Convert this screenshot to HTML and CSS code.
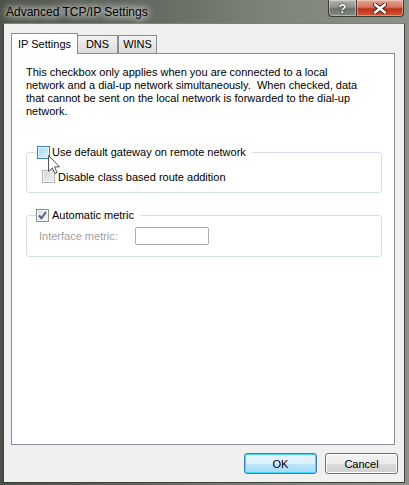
FILE: index.html
```html
<!DOCTYPE html>
<html lang="en">
<head>
    <meta charset="UTF-8">
    <title>Advanced TCP/IP Settings</title>
    <link rel="stylesheet" href="styles.css">
</head>
<body>
    <div class="window">
        <div class="titlebar">
            <span class="title">Advanced TCP/IP Settings</span>
            <div class="caption">
                <span class="cap help">?</span>
                <span class="cap close">
                    <svg width="16" height="11" viewBox="0 0 16 11">
                        <path d="M3 1.5 L13 9.5 M13 1.5 L3 9.5" stroke="#3a1a14" stroke-width="4.4" stroke-linecap="round"/>
                        <path d="M3 1.5 L13 9.5 M13 1.5 L3 9.5" stroke="#fff" stroke-width="2.6" stroke-linecap="round"/>
                    </svg>
                </span>
            </div>
        </div>

        <div class="client">
            <div class="tabs">
                <span class="tab active">IP Settings</span>
                <span class="tab dns">DNS</span>
                <span class="tab">WINS</span>
            </div>

            <div class="panel">
                <p class="note">
                    This checkbox only applies when you are connected to a local<br>
                    network and a dial-up network simultaneously.&nbsp; When checked, data<br>
                    that cannot be sent on the local network is forwarded to the dial-up<br>
                    network.
                </p>

                <fieldset class="group gateway">
                    <legend>
                        <label class="check"><span class="box hover"></span>Use default gateway on remote network</label>
                    </legend>
                    <label class="check sub"><span class="box off"></span>Disable class based route addition</label>
                </fieldset>

                <fieldset class="group metric">
                    <legend>
                        <label class="check">
                            <span class="box checked">
                                <svg width="9" height="9" viewBox="0 0 9 9">
                                    <path d="M1 4.5 L3.4 7.2 L8 1" fill="none" stroke="#4a5d86" stroke-width="1.9"/>
                                </svg>
                            </span>Automatic metric
                        </label>
                    </legend>
                    <div class="metric-row">
                        <span class="dim">Interface metric:</span>
                        <span class="field"></span>
                    </div>
                </fieldset>

                <svg class="cursor" width="13" height="21" viewBox="0 0 13 21">
                    <path d="M0.5 0.5 L0.5 16.5 L4.3 12.8 L6.8 18.6 L9.1 17.6 L6.6 11.9 L11.6 11.9 Z" fill="#fff" stroke="#555" stroke-width="1"/>
                </svg>
            </div>

            <div class="buttons">
                <button class="btn default">OK</button>
                <button class="btn">Cancel</button>
            </div>
        </div>
    </div>
</body>
</html>
```

FILE: styles.css
```css
body {
    margin: 0;
    font-family: 'Liberation Sans', Arial, sans-serif;
    font-size: 11px;
    color: #000;
    background: #5c6158;
}

.window {
    width: 409px;
    height: 485px;
    background: linear-gradient(90deg, #4c5147 0%, #5f645a 30%, #7e8379 65%, #8d9189 100%);
    box-sizing: border-box;
    overflow: hidden;
}

/* title bar */

.titlebar {
    display: flex;
    align-items: flex-start;
    height: 23px;
}

.title {
    padding-left: 6px;
    line-height: 24px;
    font-size: 12px;
    text-shadow: 0 0 6px #fff, 0 0 10px rgba(255, 255, 255, 0.9), 0 0 16px rgba(255, 255, 255, 0.6);
}

.caption {
    display: flex;
    margin-left: auto;
    margin-right: 5px;
}

.cap {
    display: flex;
    align-items: center;
    justify-content: center;
    height: 17px;
    box-sizing: border-box;
    border: 1px solid #3a3c38;
    border-top: none;
    box-shadow: inset 0 0 0 1px rgba(255, 255, 255, 0.35);
}

.help {
    width: 28px;
    border-right: none;
    border-radius: 0 0 0 4px;
    background: linear-gradient(#b1b5ae 0%, #8e928b 45%, #6d7169 55%, #878b84 100%);
    color: #fff;
    font-weight: bold;
    font-size: 13px;
    text-shadow: 0 0 2px #222, 0 0 1px #000;
}

.close {
    width: 48px;
    border-radius: 0 0 4px 0;
    background: linear-gradient(#e5a594 0%, #d5765f 45%, #bf3016 55%, #d4563a 100%);
}

/* client area */

.client {
    margin-left: 3px;
    width: 402px;
    height: 460px;
    box-sizing: border-box;
    border: 1px solid #3f433c;
    border-top-color: #7d8179;
    background: #f0f0f0;
}

.tabs {
    display: flex;
    align-items: flex-end;
    padding: 8px 0 0 7px;
    height: 21px;
}

.tab {
    box-sizing: border-box;
    height: 18px;
    border: 1px solid #898c95;
    border-bottom: none;
    text-align: center;
    line-height: 17px;
    background: linear-gradient(#f2f2f2, #dcdcdc);
}

.tab.active {
    position: relative;
    z-index: 1;
    width: 67px;
    height: 21px;
    margin-bottom: -1px;
    background: #fff;
    line-height: 20px;
}

.tab.dns {
    width: 40px;
    border-left: none;
}

.tab:last-child {
    width: 39px;
}

.panel {
    position: relative;
    margin-left: 7px;
    width: 384px;
    height: 392px;
    box-sizing: border-box;
    border: 1px solid #898c95;
    background: #fff;
}

.note {
    margin: 0;
    padding: 12px 14px 0;
    line-height: 13px;
}

/* group boxes */

.group {
    margin: 28px 0 0 14px;
    width: 356px;
    box-sizing: border-box;
    border: 1px solid #d5dfe5;
    border-radius: 3px;
    padding: 11px 9px 9px;
}

.group legend {
    padding: 0 6px 0 1px;
    line-height: 13px;
}

.metric {
    margin-top: 16px;
    padding: 5px 9px 11px;
}

.metric legend {
    padding-left: 0;
}

.check {
    display: flex;
    align-items: center;
    height: 13px;
    gap: 2px;
}

.metric .check {
    gap: 3px;
}

.check.sub {
    margin-left: 6px;
    gap: 3px;
}

.box {
    display: flex;
    align-items: center;
    justify-content: center;
    width: 13px;
    height: 13px;
    box-sizing: border-box;
    border: 1px solid #8e8f8f;
    box-shadow: inset 0 0 0 1px #f4f4f4;
    background: linear-gradient(135deg, #cbcfd5, #f6f6f6);
}

.box.hover {
    border-color: #3c7fb1;
    box-shadow: inset 0 0 0 1px #def9fa;
    background: linear-gradient(135deg, #a7d9f5, #d8f0fc);
}

.box.off {
    border-color: #b1b1b1;
    box-shadow: inset 0 0 0 1px #f7f7f7;
    background: linear-gradient(135deg, #d4d4d4, #efefef);
}

.box.checked {
    background: linear-gradient(135deg, #d9dbde, #f8f8f8);
}

.metric-row {
    display: flex;
    align-items: center;
    margin-left: 3px;
    height: 18px;
}

.dim {
    color: #a0a0a0;
    width: 96px;
}

.field {
    width: 74px;
    height: 18px;
    box-sizing: border-box;
    border: 1px solid #abadb3;
    border-radius: 2px;
    background: #fff;
}

.cursor {
    position: absolute;
    left: 36px;
    top: 101px;
}

/* dialog buttons */

.buttons {
    display: flex;
    justify-content: flex-end;
    gap: 8px;
    padding: 8px 6px 0 0;
}

.btn {
    width: 73px;
    height: 21px;
    padding: 0;
    font-family: 'Liberation Sans', Arial, sans-serif;
    font-size: 11px;
    color: #000;
    border: 1px solid #707070;
    border-radius: 3px;
    background: linear-gradient(#f2f2f2 0%, #ebebeb 50%, #dddddd 50%, #cfcfcf 100%);
    box-shadow: inset 0 0 0 1px #fcfcfc;
}

.btn.default {
    border-color: #3c7fb1;
    background: linear-gradient(#eaf6fd 0%, #d9f0fc 50%, #bee6fd 50%, #a7d9f5 100%);
    box-shadow: inset 0 0 0 1px #48d8fb;
}
```
